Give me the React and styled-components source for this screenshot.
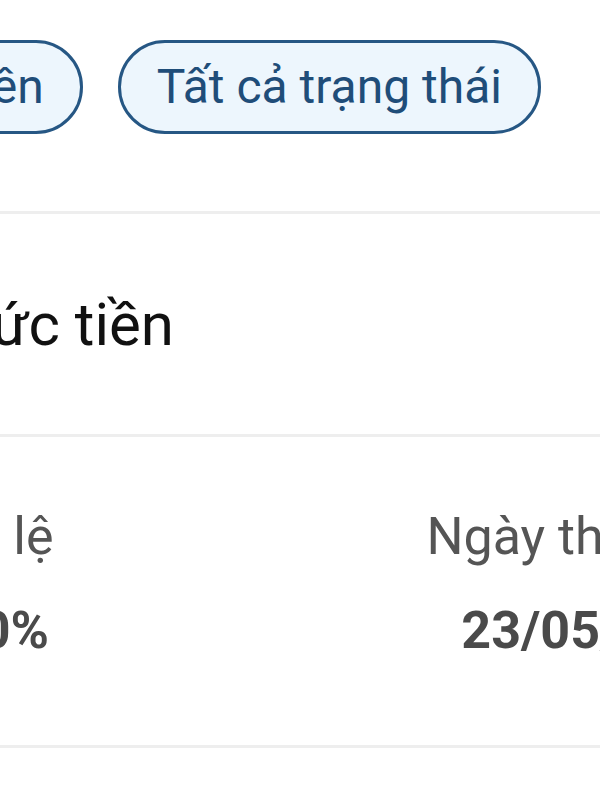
import React from "react";
import styled, { createGlobalStyle } from "styled-components";

const GlobalStyle = createGlobalStyle`
  html, body {
    margin: 0;
    padding: 0;
    background: #ffffff;
  }
  body {
    font-family: Roboto, "Noto Sans", "Liberation Sans", sans-serif;
  }
`;

const Page = styled.div`
  width: 600px;
  height: 800px;
  overflow: hidden;
  background: #ffffff;
`;

const Canvas = styled.div`
  width: 1200px;
  margin-left: -300px;
`;

const ChipRow = styled.div`
  display: flex;
  justify-content: flex-end;
  gap: 35px;
  padding: 40px 359px 77px 0;
`;

const Chip = styled.button`
  flex-shrink: 0;
  height: 94px;
  padding: 0 36px;
  border: 3px solid #265784;
  border-radius: 47px;
  background: #edf6fd;
  color: #1f4d79;
  font-family: inherit;
  font-size: 48px;
  white-space: nowrap;
  line-height: 1;
`;

const Divider = styled.div`
  height: 3px;
  background: #eeeeee;
`;

const TitleRow = styled.div`
  height: 220px;
  display: flex;
  align-items: center;
  padding-left: 100px;
`;

const Title = styled.h2`
  margin: 0;
  font-size: 60px;
  font-weight: 400;
  color: #111111;
  white-space: nowrap;
`;

const InfoGrid = styled.div`
  display: grid;
  grid-template-columns: 600px 600px;
  padding: 70px 0 84px;
`;

const InfoCell = styled.div`
  display: flex;
  flex-direction: column;
  align-items: center;
  gap: 33px;
`;

const Label = styled.span`
  font-size: 52px;
  line-height: 60px;
  color: #555555;
  white-space: nowrap;
`;

const Value = styled.span`
  font-size: 52px;
  line-height: 61px;
  font-weight: 700;
  color: #4a4a4a;
  white-space: nowrap;
`;

const filters = ["Tất cả loại tiền", "Tất cả trạng thái"];

const info = [
  { label: "Tỷ lệ", value: "20%" },
  { label: "Ngày thực hiện", value: "23/05/2024" },
];

export default function App() {
  return (
    <>
      <GlobalStyle />
      <Page>
        <Canvas>
          <ChipRow>
            {filters.map((f) => (
              <Chip key={f}>{f}</Chip>
            ))}
          </ChipRow>
          <Divider />
          <TitleRow>
            <Title>Hình thức tiền</Title>
          </TitleRow>
          <Divider />
          <InfoGrid>
            {info.map((i) => (
              <InfoCell key={i.label}>
                <Label>{i.label}</Label>
                <Value>{i.value}</Value>
              </InfoCell>
            ))}
          </InfoGrid>
          <Divider />
        </Canvas>
      </Page>
    </>
  );
}
